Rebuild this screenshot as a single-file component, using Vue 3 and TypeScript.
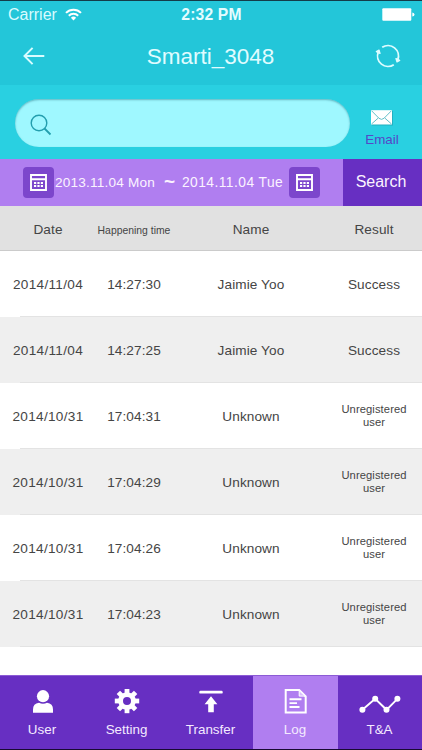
<script setup lang="ts">
interface LogEntry {
  date: string
  time: string
  name: string
  result: string
}

const entries: LogEntry[] = [
  { date: '2014/11/04', time: '14:27:30', name: 'Jaimie Yoo', result: 'Success' },
  { date: '2014/11/04', time: '14:27:25', name: 'Jaimie Yoo', result: 'Success' },
  { date: '2014/10/31', time: '17:04:31', name: 'Unknown', result: 'Unregistered user' },
  { date: '2014/10/31', time: '17:04:29', name: 'Unknown', result: 'Unregistered user' },
  { date: '2014/10/31', time: '17:04:26', name: 'Unknown', result: 'Unregistered user' },
  { date: '2014/10/31', time: '17:04:23', name: 'Unknown', result: 'Unregistered user' },
]

const tabs: string[] = ['User', 'Setting', 'Transfer', 'Log', 'T&A']
const activeTab = 'Log'
const teeth: number[] = [0, 45, 90, 135, 180, 225, 270, 315]
</script>

<template>
  <div class="screen">
    <div class="status">
      <div class="carrier">
        <span>Carrier</span>
        <svg width="17" height="13" viewBox="0 0 17 13" fill="none" stroke="#fff" stroke-width="2">
          <path d="M1 4.9a10.6 10.6 0 0 1 15 0M3.8 7.7a6.7 6.7 0 0 1 9.4 0" />
          <path d="M8.5 12.4L5.9 9.8a3.7 3.7 0 0 1 5.2 0z" fill="#fff" stroke="none" />
        </svg>
      </div>
      <span class="clock">2:32 PM</span>
      <svg class="battery" width="33" height="13" viewBox="0 0 33 13">
        <rect x="0.3" y="0.2" width="29" height="12.6" rx="1" fill="#fff" />
        <path d="M30.3 4.4q2.2 0.3 2.2 2.1t-2.2 2.1z" fill="#fff" />
      </svg>
    </div>

    <header class="nav">
      <svg width="22" height="18" viewBox="0 0 22 18" fill="none" stroke="#d8fcff" stroke-width="2">
        <path d="M9.6 0.9L1.5 9l8.1 8.1M1.5 9H21.3" />
      </svg>
      <h1>Smarti_3048</h1>
      <svg width="26" height="26" viewBox="0 0 26 26" fill="none" stroke="#ddfcff" stroke-width="1.8">
        <path d="M7.2 4.3A10.5 10.5 0 0 1 22.8 16.8M18.8 21.7A10.5 10.5 0 0 1 3.2 9.2" />
        <path d="M1.4 8.6l2.6-1.4 1 3.2zM24.6 17.4l-2.6 1.4-1-3.2z" fill="#ddfcff" stroke-width="1.4" stroke-linejoin="round" />
      </svg>
    </header>

    <div class="searchbar">
      <div class="field">
        <svg width="22" height="22" viewBox="0 0 22 22" fill="none" stroke="#239eae">
          <circle cx="9" cy="9" r="7.8" stroke-width="1.4" />
          <path d="M14.5 14.5l6 6" stroke-width="1.8" />
        </svg>
      </div>
      <div class="email">
        <svg width="22" height="16" viewBox="0 0 22 16">
          <rect x="1" y="1" width="21" height="14.5" fill="#198fa2" opacity="0.5" />
          <rect x="0" y="0.2" width="21" height="14.3" fill="#fff" />
          <path d="M0.5 0.7l7.5 7.6q2.5 2.2 5 0l7.5-7.6M0.5 14l7-6.2M20.5 14l-7-6.2" fill="none" stroke="#63bfc9" stroke-width="1" />
        </svg>
        <span>Email</span>
      </div>
    </div>

    <div class="filter">
      <div class="range">
        <span class="calendar">
          <svg width="17" height="17" viewBox="0 0 17 17" fill="none" stroke="#fff">
            <path d="M1 1H16V16H1zM1 5.2H16" stroke-width="1.9" />
            <path d="M4 8.9H13M4 12H13" stroke-width="2" stroke-dasharray="2.2 1.2" />
          </svg>
        </span>
        <span class="from">2013.11.04 Mon</span>
        <span class="tilde">~</span>
        <span class="to">2014.11.04 Tue</span>
        <span class="calendar">
          <svg width="17" height="17" viewBox="0 0 17 17" fill="none" stroke="#fff">
            <path d="M1 1H16V16H1zM1 5.2H16" stroke-width="1.9" />
            <path d="M4 8.9H13M4 12H13" stroke-width="2" stroke-dasharray="2.2 1.2" />
          </svg>
        </span>
      </div>
      <div class="go">Search</div>
    </div>

    <div class="columns head">
      <span>Date</span>
      <span class="small">Happening time</span>
      <span>Name</span>
      <span>Result</span>
    </div>

    <div class="list">
      <div v-for="entry in entries" :key="entry.time" class="columns entry">
        <span class="date">{{ entry.date }}</span>
        <span>{{ entry.time }}</span>
        <span>{{ entry.name }}</span>
        <span :class="{ note: entry.result !== 'Success' }">{{ entry.result }}</span>
      </div>
    </div>

    <nav class="tabs">
      <div v-for="tab in tabs" :key="tab" class="tab" :class="{ active: tab === activeTab }">
        <svg v-if="tab === 'User'" width="20" height="26" viewBox="0 0 20 26" fill="#fff">
          <circle cx="10" cy="7.2" r="6.1" />
          <path d="M0 23.8V20.4q0-6 6-6.6 4 1.7 8 0 6 .6 6 6.6v3.4z" />
        </svg>
        <svg v-else-if="tab === 'Setting'" width="26" height="26" viewBox="0 0 26 26" fill="#fff">
          <circle cx="13" cy="12" r="6.4" fill="none" stroke="#fff" stroke-width="4.8" />
          <rect v-for="angle in teeth" :key="angle" x="10.6" y="-0.2" width="4.8" height="5.5" :transform="`rotate(${angle} 13 12)`" />
        </svg>
        <svg v-else-if="tab === 'Transfer'" width="24" height="26" viewBox="0 0 24 26" fill="#fff">
          <rect x="0.3" y="1.7" width="23.4" height="2.9" rx="1.2" />
          <path d="M12 7.2l6.4 8.1h-3.6v7.9H9.2v-7.9H5.6z" />
        </svg>
        <svg v-else-if="tab === 'Log'" width="24" height="26" viewBox="0 0 24 26" fill="none" stroke="#fff">
          <path d="M2 0.3H15.4L22 6.9V23H2z" stroke-width="2" transform="translate(-0.3 0.6)" />
          <path d="M15.2 1.6V7.1H21z" stroke-width="1" fill="#d9beff" />
          <path d="M5.5 10.2H17.5M5.5 14.1H13M5.5 18H15.5" stroke-width="1.9" />
        </svg>
        <svg v-else width="42" height="26" viewBox="0 0 42 26" fill="#fff">
          <path d="M3.4 20.8L16.2 9.8 27.5 20.8 38.4 9.8" fill="none" stroke="#fff" stroke-width="1.9" />
          <circle cx="3.4" cy="20.8" r="3" />
          <circle cx="16.2" cy="9.8" r="3" />
          <circle cx="27.5" cy="20.8" r="3" />
          <circle cx="38.4" cy="9.8" r="3" />
        </svg>
        <span>{{ tab }}</span>
      </div>
    </nav>
  </div>
</template>

<style>
body {
  margin: 0;
  background: #fff;
}
</style>

<style scoped>
.screen {
  width: 422px;
  height: 750px;
  box-sizing: border-box;
  display: flex;
  flex-direction: column;
  border-top: 1px solid #143c49;
  border-bottom: 1px solid #180a32;
  background: #fff;
  font-family: "Liberation Sans", Arial, sans-serif;
  color: #454545;
  overflow: hidden;
  white-space: nowrap;
}
svg {
  display: block;
  flex: none;
}
.status {
  height: 27px;
  flex: none;
  display: grid;
  grid-template-columns: 1fr auto 1fr;
  align-items: center;
  padding: 0 7px 0 8px;
  background: #23c6d9;
  color: #fff;
  font-size: 16px;
}
.carrier {
  display: flex;
  align-items: center;
  gap: 8px;
  color: #d9fbff;
}
.clock {
  font-weight: bold;
  font-size: 15.7px;
  letter-spacing: 0.15px;
  color: #e4fcff;
}
.battery {
  justify-self: end;
}
.nav {
  height: 57px;
  flex: none;
  box-sizing: border-box;
  display: flex;
  align-items: center;
  justify-content: space-between;
  padding: 0 21px 2px 23px;
  background: #23c6d9;
}
h1 {
  margin: 2px -1px 0 0;
  font-size: 22.5px;
  font-weight: normal;
  line-height: 28px;
  color: #e0fcff;
}
.searchbar {
  height: 74px;
  flex: none;
  box-sizing: border-box;
  display: flex;
  padding: 14px 0 0 15px;
  background: #29d0e1;
}
.field {
  width: 335px;
  height: 48px;
  box-sizing: border-box;
  display: flex;
  align-items: center;
  padding: 3px 0 0 15px;
  border-radius: 24px;
  background: #9ff8ff;
  box-shadow: inset 0 1px 2px #38899699;
}
.email {
  width: 64px;
  display: flex;
  flex-direction: column;
  align-items: center;
  padding-top: 11px;
  color: #5547c8;
  font-size: 13.4px;
}
.email span {
  margin-top: 6px;
  line-height: 15px;
}
.filter {
  height: 47px;
  flex: none;
  display: flex;
  color: #fbf3ff;
}
.range {
  width: 343px;
  box-sizing: border-box;
  display: flex;
  align-items: center;
  padding-left: 23px;
  background: #b07ef0;
}
.calendar {
  width: 31px;
  height: 31px;
  display: grid;
  place-items: center;
  border-radius: 4px;
  background: #7c46cc;
}
.from {
  width: 110px;
  box-sizing: border-box;
  padding-left: 1px;
  font-size: 13.6px;
  letter-spacing: 0.2px;
}
.tilde {
  width: 18px;
  font-size: 19px;
  font-weight: bold;
  line-height: 20px;
  padding-bottom: 2px;
}
.to {
  width: 107px;
  font-size: 13.8px;
  letter-spacing: 0.45px;
}
.go {
  width: 79px;
  box-sizing: border-box;
  padding-right: 3px;
  background: #672fc2;
  font-size: 16px;
  line-height: 46px;
  text-align: center;
}
.columns {
  display: grid;
  grid-template-columns: 96px 76px 158px 88px;
  align-items: center;
  justify-items: center;
  font-size: 13.6px;
  letter-spacing: 0.1px;
  text-align: center;
}
.date {
  letter-spacing: 0.3px;
}
.head {
  height: 45px;
  flex: none;
  box-sizing: border-box;
  padding-top: 2px;
  border-bottom: 1px solid #cbcbcb;
  background: #e1e1e1;
}
.head .small {
  font-size: 10.4px;
  letter-spacing: 0;
  padding-top: 2px;
}
.list {
  flex: 1;
}
.entry {
  height: 66px;
  box-sizing: border-box;
  padding-top: 1px;
  background: linear-gradient(#e3e3e3, #e3e3e3) 20px 100% / 402px 1px no-repeat #fff;
}
.entry:nth-child(even) {
  background-color: #efefef;
}
.note {
  width: 70px;
  padding-bottom: 2px;
  font-size: 11.2px;
  line-height: 13px;
  white-space: normal;
}
.tabs {
  height: 74px;
  flex: none;
  box-sizing: border-box;
  display: grid;
  grid-template-columns: 85px 84px 84px 85px 84px;
  background: #672fc2;
}
.tab {
  display: flex;
  flex-direction: column;
  align-items: center;
  box-sizing: border-box;
  padding-top: 13px;
  border-top: 1px solid #8c5bd5;
  color: #f4eaff;
  font-size: 13.4px;
}
.tab span {
  margin: 7px 1px 0 0;
  line-height: 15px;
}
.active {
  background: #b07ef0;
}
</style>
